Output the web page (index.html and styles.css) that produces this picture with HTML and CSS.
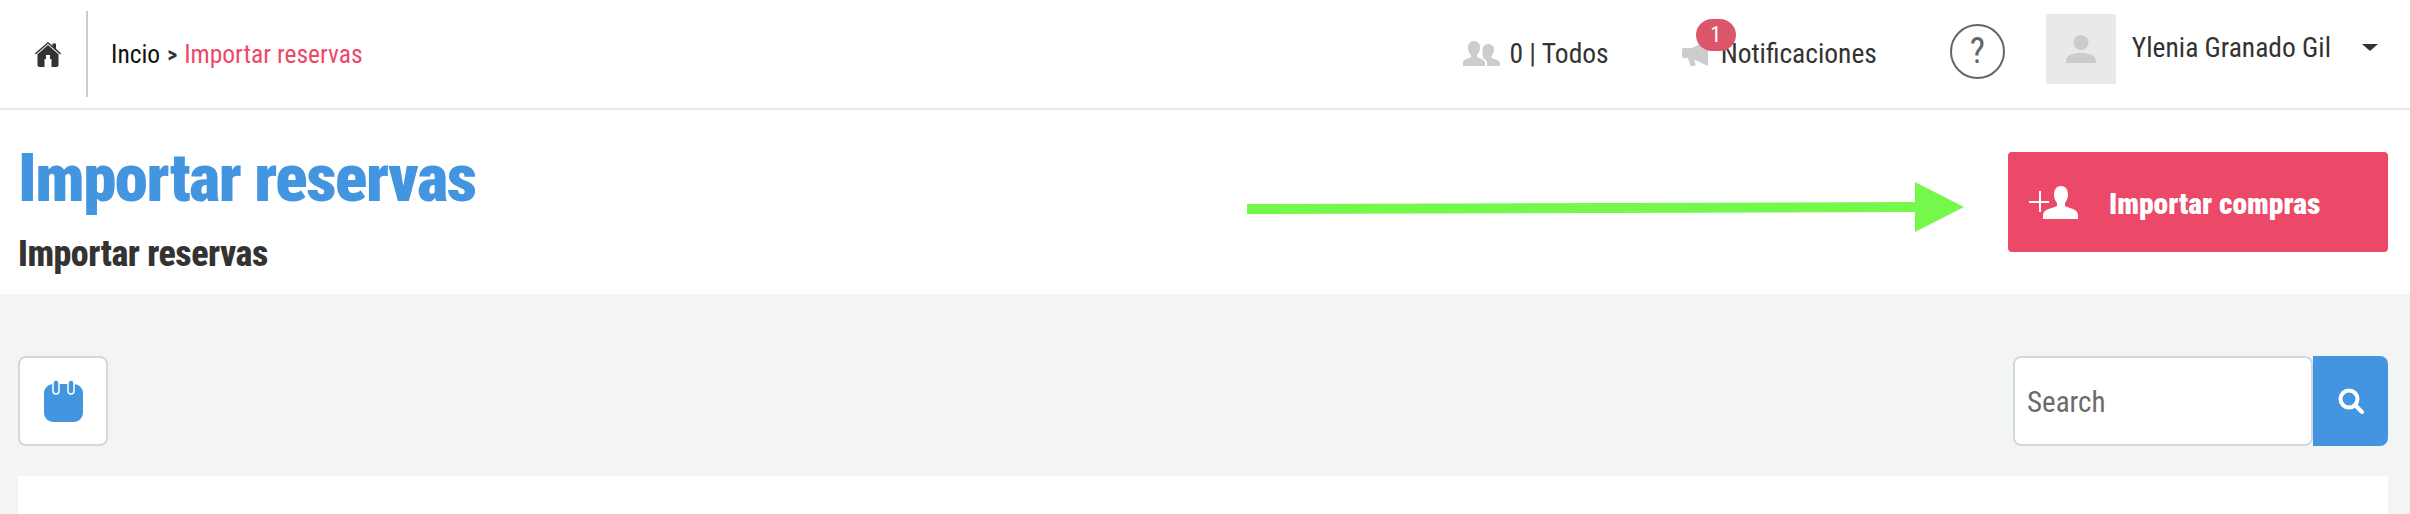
FILE: index.html
```html
<!DOCTYPE html>
<html lang="es">
<head>
  <meta charset="UTF-8" />
  <meta name="viewport" content="width=device-width, initial-scale=1.0" />
  <title>Importar reservas</title>
  <link rel="stylesheet" href="styles.css">
</head>
<body>
  <header class="topbar">
    <a class="home-cell" href="#">
      <svg class="home-icon" viewBox="0 0 26 25"><path d="M13 0 L17.500 3.800 V1.500 H21 V6.800 L26 11.200 L25.200 12.400 L13 1.800 L0.800 12.400 L0 11.200 Z" fill="#333"/><path d="M13 3 L23.500 12.200 V23 Q23.500 25 21.500 25 H16.500 V17 H9.500 V25 H4.500 Q2.500 25 2.500 23 V12.200 Z M11 13 V17 H15 V13 Z" fill="#333" fill-rule="evenodd"/></svg>
    </a>
    <nav class="breadcrumb">
      <a href="#">Incio</a>
      <span class="sep">&gt;</span>
      <span class="current">Importar reservas</span>
    </nav>
    <div class="topbar-right">
      <div class="top-item users">
        <svg class="users-icon" viewBox="0 0 37 25"><path d="M11 0 C15 0 17 3 17 7 C17 10 15.500 12.500 14 14 V16 C17 17.500 21 18.500 22 21 V25 H0 V20.500 C1 18.500 5.500 17.500 8 16 V14 C6.500 12.500 5 10 5 7 C5 3 7 0 11 0 Z" fill="#ccc"/><path d="M25.500 3 C29 3 31 5.500 31 9 C31 11.500 29.500 13.500 28.500 15 V17 C31 18 36 19 37 21.500 V25 H24 V20.500 C23 18.500 21 17.500 20 17 V15 C19.500 13.500 19.500 11.500 19.500 9 C19.500 5.500 22 3 25.500 3 Z" fill="#ccc"/></svg>
        <span>0 | Todos</span>
      </div>
      <div class="top-item notifications">
        <svg class="mega-icon" viewBox="0 0 26 26"><path d="M26 0 V26 L12 19.500 L13.500 24 Q14 26 12 26 H10 Q8.500 26 8 24.500 L6 18 H2 Q0 18 0 16 V10 Q0 8 2 8 H10 Z" fill="#ccc"/></svg>
        <span>Notificaciones</span>
        <span class="badge">1</span>
      </div>
      <div class="help">?</div>
      <div class="avatar">
        <svg class="avatar-icon" viewBox="0 0 30 28"><circle cx="15" cy="7.500" r="7.500" fill="#ccc"/><path d="M0 28 V26 C0 20 7 18 15 18 C23 18 30 20 30 26 V28 Z" fill="#ccc"/></svg>
      </div>
      <div class="user-name">Ylenia Granado Gil</div>
      <span class="caret"></span>
    </div>
  </header>

  <section class="page-head">
    <div>
      <h1>Importar reservas</h1>
      <h2>Importar reservas</h2>
    </div>
    <button class="btn-import">
      <svg class="import-icon" viewBox="0 0 50 33"><path d="M0 15 H10 V5 H12 V15 H20 V17 H12 V26 H10 V17 H0 Z" fill="#fff"/><path d="M32 0 C37 0 39 4 39 9 C39 12 37.500 15 36 17 V20 C40 22 49 23 49 29 V33 H14 V29 C14 23 24 22 28 20 V17 C26.500 15 25 12 25 9 C25 4 27 0 32 0 Z" fill="#fff"/></svg>
      <span class="btn-label">Importar compras</span>
    </button>
    <svg class="arrow" viewBox="0 0 717 50"><path d="M0 22 L668 20 V0 L717 25 L668 50 V30 L0 32 Z" fill="#75f84c"/></svg>
  </section>

  <main class="content">
    <div class="toolbar">
      <button class="btn-calendar">
        <svg class="calendar-icon" viewBox="0 0 39 42"><rect x="0" y="4" width="39" height="38" rx="9" fill="#4495e0"/><rect x="9" y="0" width="6" height="14" rx="3" fill="#4495e0" stroke="#fff" stroke-width="1.500"/><rect x="24" y="0" width="6" height="14" rx="3" fill="#4495e0" stroke="#fff" stroke-width="1.500"/></svg>
      </button>
      <form class="search">
        <input type="text" placeholder="Search">
        <button type="button">
          <svg viewBox="0 0 26 26" class="search-icon"><circle cx="11" cy="11" r="8.500" fill="none" stroke="#fff" stroke-width="4"/><path d="M17 17 L24 24" stroke="#fff" stroke-width="4" stroke-linecap="round"/></svg>
        </button>
      </form>
    </div>
    <div class="card"></div>
  </main>
</body>
</html>
```

FILE: styles.css
```css
* {
  box-sizing: border-box;
}

html,
body {
  margin: 0;
  height: 514px;
  overflow: hidden;
}

body {
  font-family: "Roboto Condensed", Roboto, sans-serif;
  font-stretch: condensed;
  background-color: #f3f5f5;
  color: #333;
}

a {
  color: inherit;
  text-decoration: none;
}

.topbar {
  display: flex;
  align-items: center;
  height: 110px;
  background-color: #fff;
  border-bottom: 2px solid #e7e7e7;
  font-size: 27.500px;
}

.home-cell {
  display: flex;
  align-items: center;
  justify-content: center;
  width: 88px;
  height: 86px;
  padding-left: 9px;
  border-right: 2px solid #ccc;
}

.home-icon {
  width: 26px;
  height: 25px;
}

.breadcrumb {
  display: flex;
  align-items: center;
  gap: 7px;
  margin-left: 23px;
  color: #111;
  font-size: 25.500px;
}

.sep {
  font-size: 22px;
  font-weight: bold;
  color: #333;
}

.current {
  color: #ec4969;
}

.topbar-right {
  display: flex;
  align-items: center;
  margin-left: auto;
  height: 100%;
}

.top-item {
  position: relative;
  display: flex;
  align-items: center;
  margin-top: -2px;
}

.users {
  gap: 9px;
  margin-right: 73px;
}

.users-icon {
  width: 37px;
  height: 25px;
}

.notifications {
  gap: 13px;
  margin-right: 73px;
}

.mega-icon {
  width: 26px;
  height: 26px;
}

.badge {
  position: absolute;
  left: 14px;
  top: -18px;
  width: 40px;
  height: 32px;
  border-radius: 16px;
  background-color: #dc566b;
  color: #fff;
  font-size: 22px;
  text-align: center;
  line-height: 32px;
}

.help {
  width: 55px;
  height: 55px;
  margin-top: -5px;
  margin-right: 41px;
  border: 2px solid #666;
  border-radius: 50%;
  color: #666;
  font-size: 36px;
  line-height: 51px;
  text-align: center;
}

.avatar {
  display: flex;
  align-items: center;
  justify-content: center;
  width: 70px;
  height: 70px;
  margin-top: -10px;
  margin-right: 16px;
  background-color: #e8e9eb;
  border-radius: 2px;
}

.avatar-icon {
  width: 30px;
  height: 28px;
}

.user-name {
  margin-right: 31px;
  margin-top: -14px;
}

.caret {
  width: 0;
  height: 0;
  border-left: 8px solid transparent;
  border-right: 8px solid transparent;
  border-top: 7px solid #333;
  margin-right: 32px;
  margin-top: -13px;
}

.page-head {
  position: relative;
  display: flex;
  justify-content: space-between;
  height: 184px;
  padding: 31px 22px 0 18px;
  background-color: #fff;
}

h1 {
  margin: 0;
  font-size: 67px;
  font-weight: 900;
  letter-spacing: -1.500px;
  line-height: 74px;
  color: #4495e0;
}

h2 {
  margin: 18px 0 0;
  font-size: 36px;
  font-weight: 800;
  letter-spacing: -0.500px;
  line-height: 42px;
  color: #333;
}

.btn-import {
  display: flex;
  align-items: center;
  gap: 30px;
  width: 380px;
  height: 100px;
  margin-top: 11px;
  padding: 0 0 0 21px;
  border: none;
  border-radius: 4px;
  background-color: #ec4969;
  color: #fff;
  font-family: inherit;
  font-stretch: condensed;
  font-size: 29.500px;
  font-weight: 900;
}

.btn-label {
  margin-top: 3px;
}

.import-icon {
  width: 50px;
  height: 33px;
}

.arrow {
  position: absolute;
  left: 1247px;
  top: 72px;
  width: 717px;
  height: 50px;
}

.content {
  padding: 62px 22px 0 18px;
}

.toolbar {
  display: flex;
  justify-content: space-between;
}

.btn-calendar {
  display: flex;
  align-items: center;
  justify-content: center;
  width: 90px;
  height: 90px;
  padding: 0;
  background-color: #fff;
  border: 2px solid #d3d7df;
  border-radius: 8px;
}

.calendar-icon {
  width: 39px;
  height: 42px;
}

.search {
  display: flex;
}

.search input {
  width: 300px;
  height: 90px;
  padding: 2px 12px 0;
  background-color: #fff;
  border: 2px solid #d3d7df;
  border-radius: 8px;
  font-family: inherit;
  font-stretch: condensed;
  font-size: 29px;
}

.search input::placeholder {
  color: #6b6b6b;
}

.search button {
  display: flex;
  align-items: center;
  justify-content: center;
  width: 75px;
  height: 90px;
  padding: 0;
  border: none;
  border-radius: 0 8px 8px 0;
  background-color: #4495e0;
}

.search-icon {
  width: 26px;
  height: 26px;
}

.card {
  height: 60px;
  margin-top: 30px;
  background-color: #fff;
}
```
